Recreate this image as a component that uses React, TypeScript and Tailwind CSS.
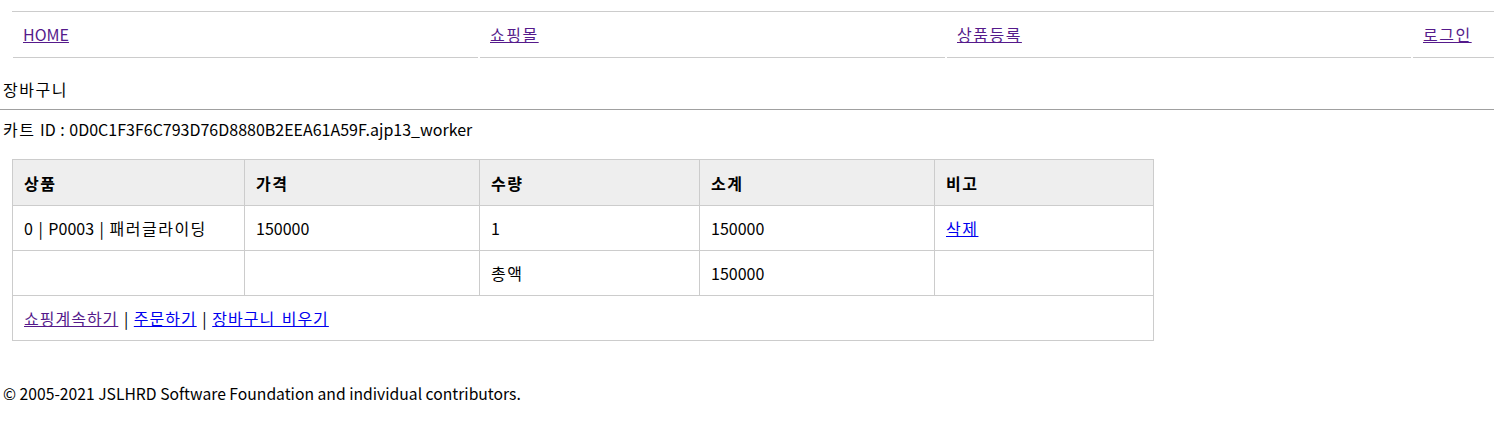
// Cart page: top nav, cart id line, bordered cart table, footer.

const font = { fontFamily: '"Noto Sans CJK KR", "Noto Sans", sans-serif' };

const navItems = [
	{ label: 'HOME', w: 'w-[465px]', ko: false },
	{ label: '쇼핑몰', w: 'w-[465px]', ko: true },
	{ label: '상품등록', w: 'w-[464px]', ko: true },
	{ label: '로그인', w: 'flex-1', ko: true },
];

// Korean runs are set a little wider to match the reference face
function Ko({ children }: { children: React.ReactNode }) {
	return <span className="tracking-[1.5px]">{children}</span>;
}

function Cell({ w, children, head }: { w: string; children?: React.ReactNode; head?: boolean }) {
	return (
		<div
			className={`${w} ${head ? 'h-[45px] font-bold' : 'h-[44px]'} flex items-center pl-[11px] border-r border-[#cccccc] last:border-r-0`}
		>
			{children}
		</div>
	);
}

const cols = ['w-[232px]', 'w-[235px]', 'w-[220px]', 'w-[235px]', 'flex-1'];

export default function App() {
	return (
		<div className="text-[16px] leading-[22px] text-black bg-white min-h-[431px]" style={font}>
			{/* nav */}
			<div className="pt-[11px] pl-[12px]">
				<div className="border-t border-[#cccccc] flex gap-[2px] pl-[1px]">
					{navItems.map((n) => (
						<div
							key={n.label}
							className={`${n.w} h-[46px] border-b border-[#cccccc] flex items-center pl-[10px] pb-[2px]`}
						>
							<a href="#" className={`underline text-[#551a8b] ${n.ko ? 'tracking-[1.5px]' : ''}`}>
								{n.label}
							</a>
						</div>
					))}
				</div>
			</div>

			<div className="mt-[20px] pl-[3px]">
				<Ko>장바구니</Ko>
			</div>
			<div className="mt-[9px] border-t border-[#a0a0a0]" />
			<div className="mt-[8px] pl-[3px] [word-spacing:1px]">
				<Ko>카트</Ko> ID : 0D0C1F3F6C793D76D8880B2EEA61A59F.ajp13_worker
			</div>

			{/* cart table */}
			<div className="mt-[19px] ml-[12px] w-[1142px] border border-[#cccccc]">
				<div className="flex bg-[#eeeeee] border-b border-[#cccccc]">
					{['상품', '가격', '수량', '소계', '비고'].map((h, i) => (
						<Cell key={h} w={cols[i]} head>
							<Ko>{h}</Ko>
						</Cell>
					))}
				</div>
				<div className="flex border-b border-[#cccccc]">
					<Cell w={cols[0]}>
						<span className="[word-spacing:2px]">
							0 | P0003 | <Ko>패러글라이딩</Ko>
						</span>
					</Cell>
					<Cell w={cols[1]}>150000</Cell>
					<Cell w={cols[2]}>1</Cell>
					<Cell w={cols[3]}>150000</Cell>
					<Cell w={cols[4]}>
						<a href="#" className="underline text-[#0000ee] tracking-[1.5px]">
							삭제
						</a>
					</Cell>
				</div>
				<div className="flex border-b border-[#cccccc]">
					<Cell w={cols[0]} />
					<Cell w={cols[1]} />
					<Cell w={cols[2]}>
						<Ko>총액</Ko>
					</Cell>
					<Cell w={cols[3]}>150000</Cell>
					<Cell w={cols[4]} />
				</div>
				<div className="h-[44px] flex items-center pl-[11px]">
					<a href="#" className="underline text-[#551a8b] tracking-[1px]">
						쇼핑계속하기
					</a>
					<span className="whitespace-pre [word-spacing:2px]"> | </span>
					<a href="#" className="underline text-[#0000ee] tracking-[1px]">
						주문하기
					</a>
					<span className="whitespace-pre [word-spacing:2px]"> | </span>
					<a href="#" className="underline text-[#0000ee] tracking-[1px] [word-spacing:2px]">
						장바구니 비우기
					</a>
				</div>
			</div>

			<div className="mt-[42px] pl-[3px] text-[15.7px]">
				© 2005-2021 JSLHRD Software Foundation and individual contributors.
			</div>
		</div>
	);
}
